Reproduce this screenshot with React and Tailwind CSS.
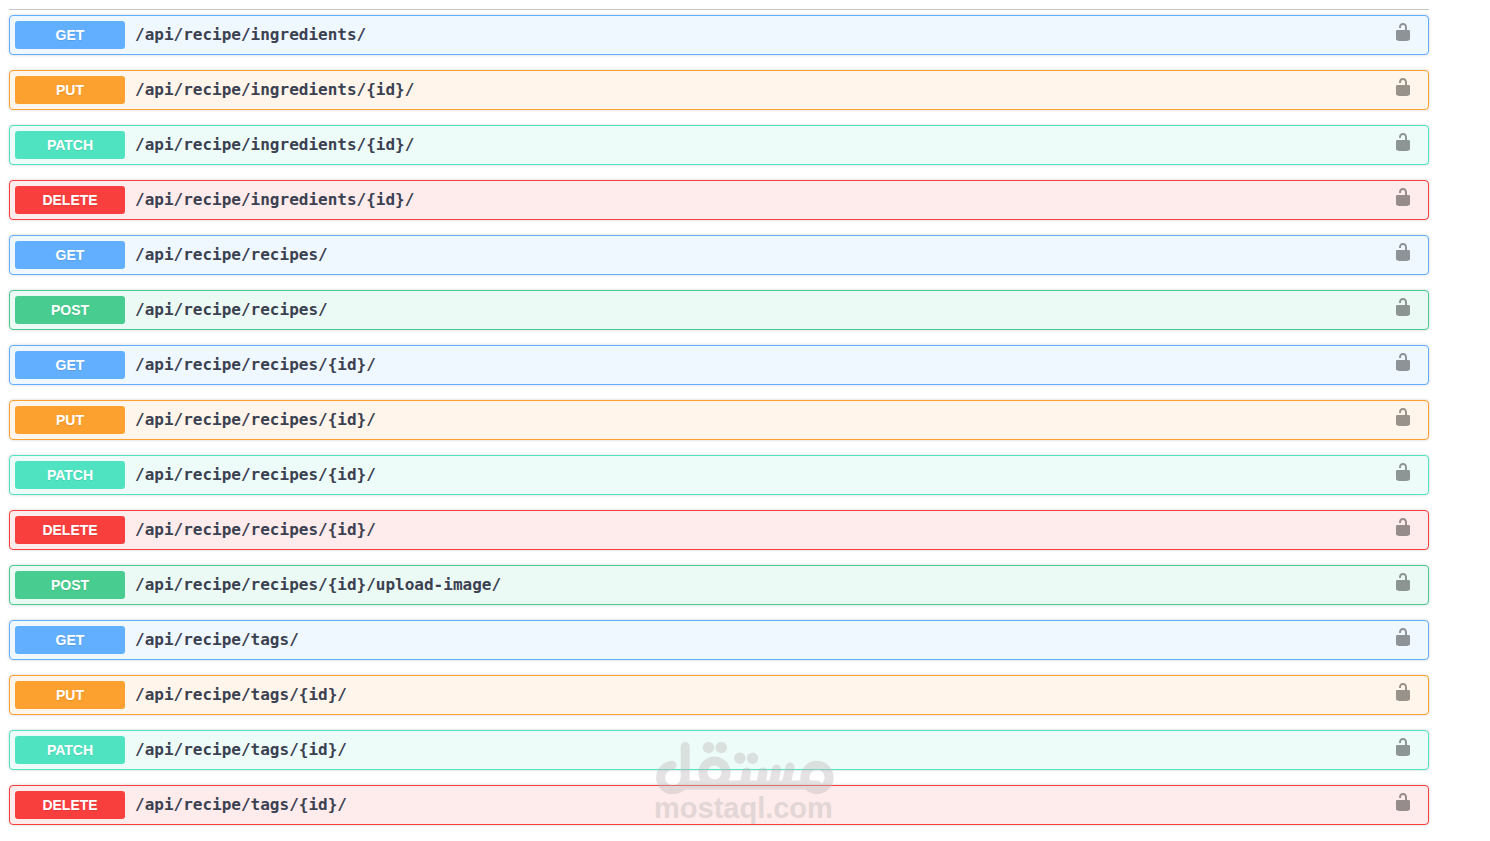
import React from 'react'

const methodStyles = {
  GET: { row: 'border-[#61affe] bg-[#eff7ff]', badge: 'bg-[#61affe]' },
  POST: { row: 'border-[#49cc90] bg-[#ebfaf4]', badge: 'bg-[#49cc90]' },
  PUT: { row: 'border-[#fca130] bg-[#fff5ea]', badge: 'bg-[#fca130]' },
  PATCH: { row: 'border-[#50e3c2] bg-[#edfcf9]', badge: 'bg-[#50e3c2]' },
  DELETE: { row: 'border-[#f93e3e] bg-[#feebeb]', badge: 'bg-[#f93e3e]' },
}

const operations = [
  { method: 'GET', path: '/api/recipe/ingredients/' },
  { method: 'PUT', path: '/api/recipe/ingredients/{id}/' },
  { method: 'PATCH', path: '/api/recipe/ingredients/{id}/' },
  { method: 'DELETE', path: '/api/recipe/ingredients/{id}/' },
  { method: 'GET', path: '/api/recipe/recipes/' },
  { method: 'POST', path: '/api/recipe/recipes/' },
  { method: 'GET', path: '/api/recipe/recipes/{id}/' },
  { method: 'PUT', path: '/api/recipe/recipes/{id}/' },
  { method: 'PATCH', path: '/api/recipe/recipes/{id}/' },
  { method: 'DELETE', path: '/api/recipe/recipes/{id}/' },
  { method: 'POST', path: '/api/recipe/recipes/{id}/upload-image/' },
  { method: 'GET', path: '/api/recipe/tags/' },
  { method: 'PUT', path: '/api/recipe/tags/{id}/' },
  { method: 'PATCH', path: '/api/recipe/tags/{id}/' },
  { method: 'DELETE', path: '/api/recipe/tags/{id}/' },
]

function UnlockedIcon() {
  return (
    <svg className="w-5 h-5" viewBox="0 0 20 20" fill="currentColor" aria-hidden="true">
      <path d="M15.8 8H14V5.6C14 2.703 12.665 1 10 1 7.334 1 6 2.703 6 5.6V6h2v-.801C8 3.754 8.797 3 10 3c1.203 0 2 .754 2 2.199V8H4c-.553 0-1 .646-1 1.199V17c0 .549.428 1.139.951 1.307l1.197.387C5.672 18.861 6.55 19 7.1 19h5.8c.549 0 1.428-.139 1.951-.307l1.196-.387c.524-.167.953-.757.953-1.306V9.199C17 8.646 16.352 8 15.8 8z" />
    </svg>
  )
}

function Operation({ method, path }) {
  const style = methodStyles[method]

  return (
    <li className={`flex items-center rounded border p-[5px] shadow-[0_0_3px_rgba(0,0,0,0.19)] ${style.row}`}>
      <button type="button" className="flex flex-1 items-center gap-[10px] text-left cursor-pointer">
        <span className={`w-[110px] rounded-[3px] py-1 text-center font-['Liberation_Sans',sans-serif] text-sm leading-5 font-bold text-white [text-shadow:0_1px_0_rgba(0,0,0,0.1)] ${style.badge}`}>
          {method}
        </span>
        <span className="font-['DejaVu_Sans_Mono',monospace] text-base leading-5 font-bold text-[#3b4151]">{path}</span>
      </button>
      <button type="button" aria-label="authorization button unlocked" className="px-[10px] pb-[6px] text-black opacity-40 cursor-pointer">
        <UnlockedIcon />
      </button>
    </li>
  )
}

function Watermark() {
  return (
    <div className="pointer-events-none absolute bottom-[18px] left-1/2 w-[182px] -translate-x-1/2 text-[#bcb8b8] opacity-40">
      <svg className="block w-full" viewBox="0 0 182 53" fill="none" stroke="currentColor" strokeWidth="9" strokeLinecap="round" aria-hidden="true">
        <path d="M18 24.300A12.300 12.300 0 1 0 31.200 36.500V5.500" />
        <path d="M31 44H163" />
        <circle cx="60.500" cy="31.500" r="11.500" />
        <circle cx="163" cy="36.500" r="12.200" />
        <path d="M92.500 31l-2 12M109 31l-2 12M122.500 28l-3 15M136 26l-4 17" />
        <g fill="currentColor" stroke="none">
          <circle cx="54.500" cy="6.500" r="5.700" />
          <circle cx="67.200" cy="6.500" r="5.700" />
          <circle cx="85.800" cy="17.300" r="5.700" />
          <circle cx="98.500" cy="17.300" r="5.700" />
        </g>
      </svg>
      <p className="font-['Liberation_Sans',sans-serif] text-[29px] leading-[29px] font-bold">mostaql.com</p>
    </div>
  )
}

function App() {
  return (
    <main className="relative bg-white pt-[9px] pb-4">
      <div className="ml-[9px] mr-[61px] border-t border-[#3b4151]/30 pt-[5px]">
        <ul className="flex flex-col gap-[15px]">
          {operations.map(op => (
            <Operation key={`${op.method} ${op.path}`} method={op.method} path={op.path} />
          ))}
        </ul>
      </div>
      <Watermark />
    </main>
  )
}

export default App
